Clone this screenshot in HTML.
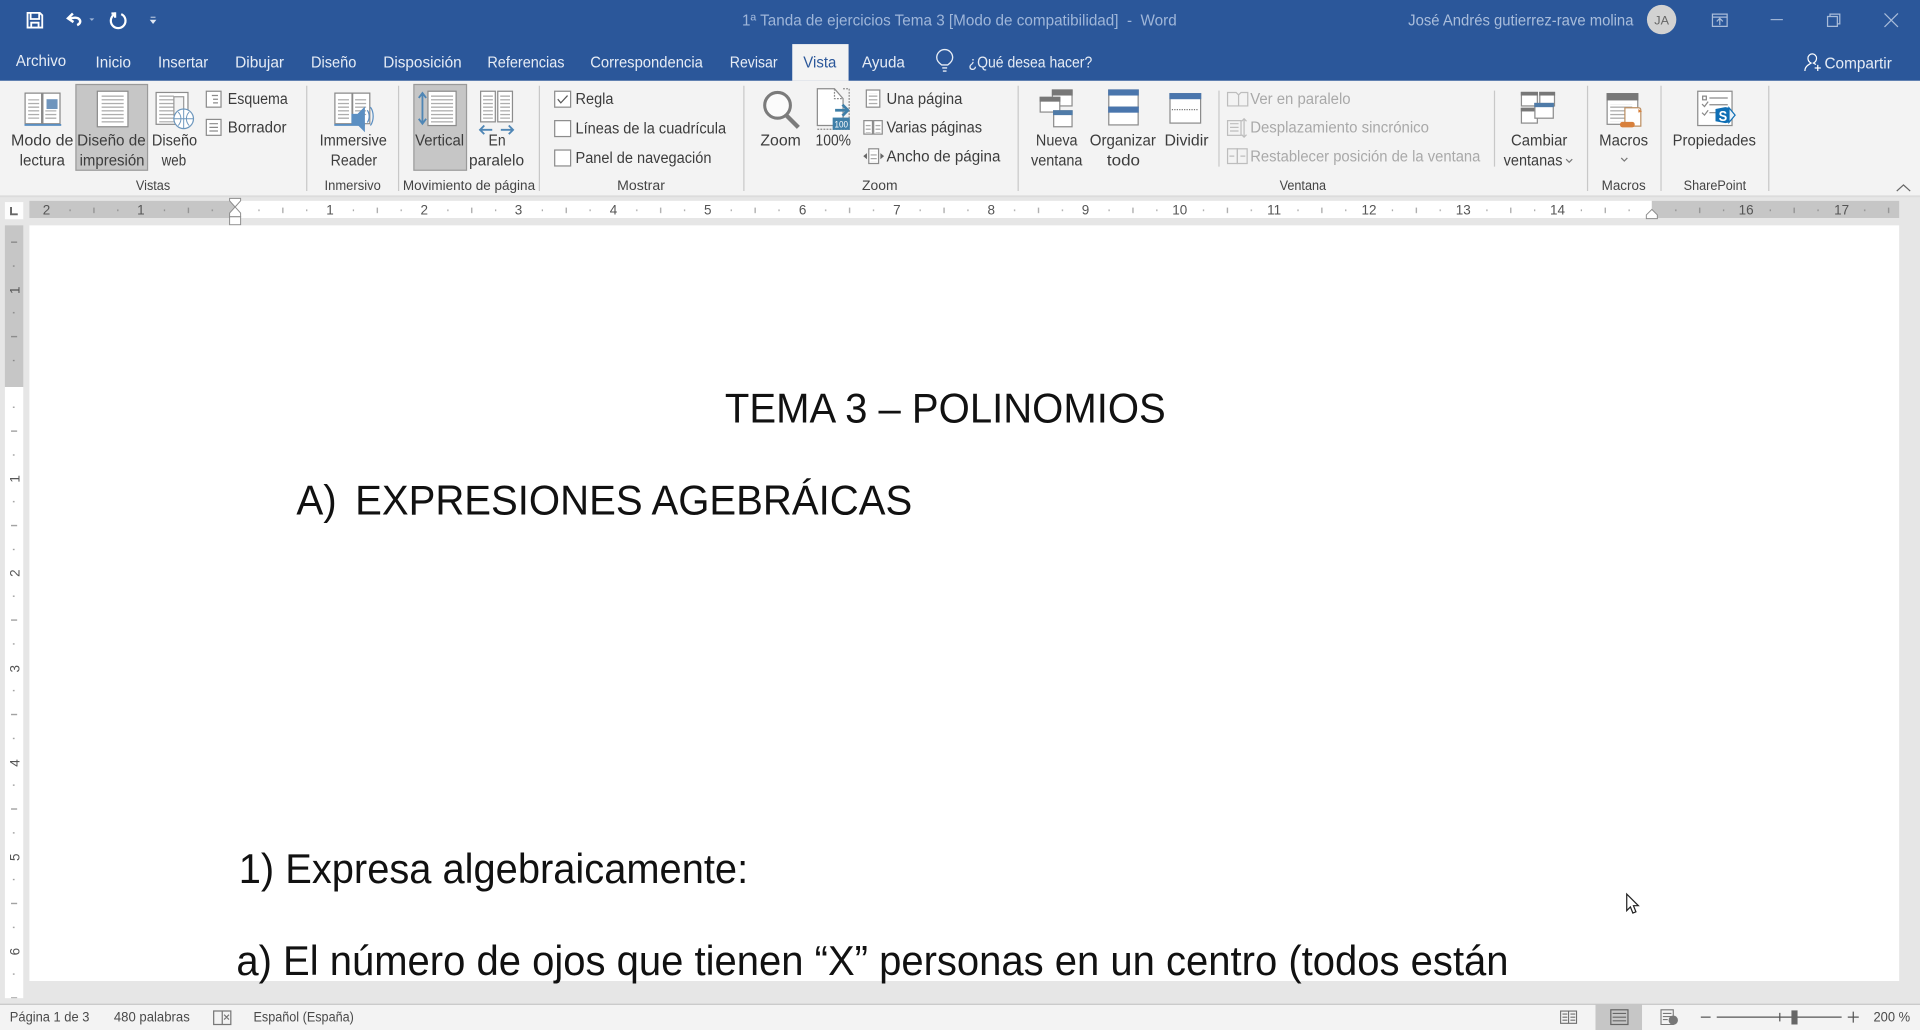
<!DOCTYPE html>
<html lang="es"><head><meta charset="utf-8"><title>Word</title>
<style>
html,body{margin:0;padding:0;width:1920px;height:1030px;overflow:hidden;background:#e6e6e6}
svg{display:block;position:absolute;left:0;top:0}
text{font-family:"Liberation Sans",sans-serif;white-space:pre}
.u{font-size:12.5px;fill:#3c3c3c}
.g{font-size:11px;fill:#444}
.t{font-size:12.5px;fill:#e6ecf5}
.d{font-size:12.5px;fill:#a9a9a9}
.s{font-size:11px;fill:#4a4a4a}
.r{font-size:11px;fill:#555;text-anchor:middle}
.b{font-size:34px;fill:#111}
.ln{fill:none;stroke:#8a8a8a;stroke-width:1}
.p{fill:#fff;stroke:#8c8c8c;stroke-width:1}
.dis{fill:none;stroke:#bdbdbd;stroke-width:1}
.sep{stroke:#c8c8c8;stroke-width:1}
</style></head><body>
<svg width="1920" height="1030" viewBox="0 0 1568 841" preserveAspectRatio="none" xmlns="http://www.w3.org/2000/svg">
<defs>
<pattern id="lines" width="6" height="3" patternUnits="userSpaceOnUse"><rect width="6" height="1" fill="#a8a8a8"/></pattern>
<pattern id="rh" x="192" y="0" width="77.14" height="20" patternUnits="userSpaceOnUse">
<rect x="19" y="9" width="1" height="1.4" fill="#666"/><rect x="38.5" y="7.5" width="1" height="4.5" fill="#666"/><rect x="58" y="9" width="1" height="1.4" fill="#666"/></pattern>
<pattern id="rv" x="0" y="313" width="20" height="77.14" patternUnits="userSpaceOnUse">
<rect x="10.5" y="19" width="1.4" height="1" fill="#666"/><rect x="9" y="38.5" width="5" height="1" fill="#666"/><rect x="10.5" y="58" width="1.4" height="1" fill="#666"/></pattern>
</defs>

<rect width="1568" height="841" fill="#e6e6e6"/>
<!-- title bar -->
<rect width="1568" height="66" fill="#2b579a"/>
<!-- QAT -->
<path d="M22.500 10.500h10l2 2v10h-12zM25 10.500v5h7v-5M25.500 22.500v-4h6v4" fill="none" stroke="#fff" stroke-width="1.500"/>
<path d="M63 20.500c2.500-1 3-3 2-4.500-1.500-2-5-2-8.500-.5M59.500 11l-4 4 4.500 3" fill="none" stroke="#fff" stroke-width="2"/>
<path d="M73 15l2 2 2-2z" fill="#9fb6d8"/>
<path d="M94 11.500a6 6 0 1 0 5 0M94 10v4.500M91 11h3.500" fill="none" stroke="#fff" stroke-width="1.800"/>
<path d="M123 14h4M123 16.500h4l-2 2.500z" fill="#dfe7f3" stroke="#dfe7f3" stroke-width=".7"/>
<text x="606" y="21" textLength="355" lengthAdjust="spacingAndGlyphs" style="font-size:12.500px;fill:#9fb6d9">1ª Tanda de ejercicios Tema 3 [Modo de compatibilidad]  -  Word</text>
<text x="1150" y="21" textLength="184" lengthAdjust="spacingAndGlyphs" style="font-size:12.500px;fill:#a9bddb">José Andrés gutierrez-rave molina</text>
<circle cx="1357" cy="16" r="12" fill="#d2d2d2"/>
<text x="1351" y="20" textLength="12" lengthAdjust="spacingAndGlyphs" style="font-size:10px;fill:#666">JA</text>
<path d="M1398.500 11.500h12v10h-12zM1398.500 14h12M1404.500 20.500v-5M1402 17.500l2.500-2.500 2.500 2.500" fill="none" stroke="#a9bcd9" stroke-width="1"/>
<path d="M1446 16h10" stroke="#9fb4d4" stroke-width="1"/>
<path d="M1492.500 13.500h8v8h-8zM1494.500 13.500v-2h8v8h-2" fill="none" stroke="#a9bcd9" stroke-width="1"/>
<path d="M1539 11l11 11M1550 11l-11 11" stroke="#a9bcd9" stroke-width="1"/>
<!-- tabs -->
<text class="t" x="13" y="54" textLength="41" lengthAdjust="spacingAndGlyphs">Archivo</text>
<text class="t" x="78" y="55" textLength="29" lengthAdjust="spacingAndGlyphs">Inicio</text>
<text class="t" x="129" y="55" textLength="41" lengthAdjust="spacingAndGlyphs">Insertar</text>
<text class="t" x="192" y="55" textLength="40" lengthAdjust="spacingAndGlyphs">Dibujar</text>
<text class="t" x="254" y="55" textLength="37" lengthAdjust="spacingAndGlyphs">Diseño</text>
<text class="t" x="313" y="55" textLength="64" lengthAdjust="spacingAndGlyphs">Disposición</text>
<text class="t" x="398" y="55" textLength="63" lengthAdjust="spacingAndGlyphs">Referencias</text>
<text class="t" x="482" y="55" textLength="92" lengthAdjust="spacingAndGlyphs">Correspondencia</text>
<text class="t" x="596" y="55" textLength="39" lengthAdjust="spacingAndGlyphs">Revisar</text>
<rect x="647" y="36" width="46" height="30" fill="#f3f3f3"/>
<text x="656" y="55" textLength="27" lengthAdjust="spacingAndGlyphs" style="font-size:12.500px;fill:#2b579a">Vista</text>
<text class="t" x="704" y="55" textLength="35" lengthAdjust="spacingAndGlyphs">Ayuda</text>
<path d="M769 53c-3-2-4-4-4-6a6.500 6.500 0 0 1 13 0c0 2-1 4-4 6zM769.500 55.500h4M770 58h3" fill="none" stroke="#e6ecf5" stroke-width="1.100"/>
<text class="t" x="791" y="55" textLength="101" lengthAdjust="spacingAndGlyphs">¿Qué desea hacer?</text>
<path d="M1474 58c0-4 3-5 5-6.500-2-1-2.500-2.500-2.500-4a3.500 3.500 0 0 1 7 0c0 1.500-.5 3-2.500 4 .8.500 1.500.8 2 1.200M1482 55.500h5M1484.500 53v5" fill="none" stroke="#fff" stroke-width="1"/>
<text class="t" x="1490" y="56" textLength="55" lengthAdjust="spacingAndGlyphs">Compartir</text>

<!-- ribbon -->
<rect y="66" width="1568" height="94" fill="#f3f3f3"/>
<rect y="159.500" width="1568" height="1.500" fill="#dcdcdc"/>
<rect x="62" y="69" width="58.500" height="70" fill="#c6c6c6" stroke="#9a9a9a"/>
<rect x="338" y="69" width="43" height="70" fill="#c6c6c6" stroke="#9a9a9a"/>
<path class="sep" d="M250.500 70v86M325.500 70v86M440.500 70v86M607.500 70v86M831.500 70v86M995.500 74v62M1220.500 74v62M1296.500 70v86M1356.500 70v86M1444.500 70v86"/>
<!-- Modo de lectura -->
<path d="M20.500 76h13.500v25h-13.500zM35 76h14v25h-14z" fill="#fff" stroke="#8a8a8a"/>
<rect x="23" y="81" width="9" height="16" fill="url(#lines)"/>
<rect x="37" y="90" width="9" height="8" fill="url(#lines)"/>
<rect x="38" y="81" width="9" height="8" fill="#6f95bd"/>
<path d="M20 102h30" stroke="#5b8fc2" stroke-width="1.500"/>
<!-- Diseño impresion -->
<rect x="79.500" y="74.500" width="25" height="29" class="p"/>
<rect x="83" y="78" width="18" height="23" fill="url(#lines)"/>
<!-- web -->
<rect x="127.500" y="75.500" width="26" height="26" class="p"/>
<rect x="130" y="78" width="12" height="22" fill="url(#lines)"/>
<rect x="142" y="79" width="8" height="15" fill="#f3f3f3" stroke="#9a9a9a"/>
<circle cx="150" cy="97" r="8" fill="#fff" stroke="#6d97bd"/>
<path d="M142 97h16M150 89v16M145.500 91.500c3 3 3 8 0 11M154.500 91.500c-3 3-3 8 0 11" fill="none" stroke="#6d97bd" stroke-width=".8"/>
<!-- esquema/borrador -->
<rect x="168.500" y="74.500" width="12" height="13" class="p"/>
<path d="M173 78h5M174 81h4M174 84h4" class="ln"/>
<rect x="168.500" y="97.500" width="12" height="13" class="p"/>
<path d="M171 101h7M171 104h7M171 107h7" class="ln"/>
<!-- Immersive -->
<path d="M273.500 76h14v25h-14zM288 76h14v25h-14z" fill="#fff" stroke="#8a8a8a"/>
<rect x="276" y="80" width="9" height="18" fill="url(#lines)"/>
<rect x="290" y="80" width="9" height="14" fill="url(#lines)"/>
<path d="M273 102h25" stroke="#5b8fc2" stroke-width="1.500"/>
<path d="M287 93h5l6-6v21l-6-6h-5z" fill="#5b8fc2"/>
<path d="M300 90c2 3 2 7 0 10M302.500 87.500c3 4 3 11 0 15" fill="none" stroke="#5b8fc2" stroke-width="1"/>
<!-- Vertical -->
<rect x="349.500" y="74.500" width="23" height="28" class="p"/>
<rect x="352" y="77" width="18" height="24" fill="url(#lines)"/>
<path d="M345 76v25M342 80l3-4 3 4M342 97l3 4 3-4" fill="none" stroke="#4f86b5" stroke-width="1.500"/>
<!-- En paralelo -->
<rect x="392.500" y="74.500" width="12" height="25" class="p"/><rect x="406.500" y="74.500" width="12" height="25" class="p"/>
<rect x="394.500" y="77" width="8" height="20" fill="url(#lines)"/><rect x="408.500" y="77" width="8" height="20" fill="url(#lines)"/>
<path d="M392 106h10M395.500 102.500l-3.500 3.500 3.500 3.500M409 106h10M415.500 102.500l3.500 3.500-3.500 3.500" fill="none" stroke="#4f86b5" stroke-width="1.500"/>
<!-- checks -->
<rect x="453" y="74.500" width="13" height="13" fill="#fff" stroke="#8c8c8c"/>
<path d="M455.500 81l2.500 3 5.500-6" fill="none" stroke="#555" stroke-width="1"/>
<rect x="453" y="98.500" width="13" height="13" fill="#fff" stroke="#8c8c8c"/>
<rect x="453" y="122.500" width="13" height="13" fill="#fff" stroke="#8c8c8c"/>
<!-- Zoom -->
<circle cx="635" cy="86" r="10.500" fill="#fbfbfb" stroke="#7b7b7b" stroke-width="2.500"/>
<path d="M642 94l10 10" stroke="#7b7b7b" stroke-width="3.500"/>
<!-- 100 -->
<path d="M667.500 72.500h14l7 8v22h-21z" fill="#fff" stroke="#8c8c8c"/>
<path d="M681.500 72.500v8h7M688.500 72.500h5v33h-26" fill="none" stroke="#8c8c8c" stroke-dasharray="1.500 1"/>
<path d="M682 90h9M688 85.500l4.500 4.500-4.500 4.500" fill="none" stroke="#3f7fa8" stroke-width="2.200"/>
<rect x="680" y="96" width="14" height="10" fill="#3f7fa8"/>
<text x="681.500" y="104" textLength="11" lengthAdjust="spacingAndGlyphs" style="font-size:7.500px;fill:#fff">100</text>
<!-- pages small -->
<rect x="707.500" y="73.500" width="11" height="14" class="p"/><rect x="709.500" y="76" width="7" height="10" fill="url(#lines)"/>
<rect x="705.500" y="98.500" width="7" height="11" class="p"/><rect x="713.500" y="98.500" width="7" height="11" class="p"/>
<rect x="707" y="100.500" width="4" height="8" fill="url(#lines)"/><rect x="715" y="100.500" width="4" height="8" fill="url(#lines)"/>
<rect x="709.500" y="121.500" width="8" height="12" class="p"/><rect x="711" y="124" width="5" height="8" fill="url(#lines)"/>
<path d="M708 125l-3 2.500 3 2.500zM719 125l3 2.500-3 2.500z" fill="#666"/>
<!-- Nueva ventana -->
<rect x="859.500" y="73.500" width="16" height="13" fill="#fff" stroke="#8c8c8c"/><rect x="859" y="73" width="17" height="5" fill="#777"/>
<rect x="849.500" y="79.500" width="16" height="12" fill="#fff" stroke="#8c8c8c"/><rect x="849" y="79" width="17" height="4" fill="#777"/>
<rect x="860.500" y="90.500" width="15" height="13" fill="#fff" stroke="#8c8c8c"/><rect x="860" y="90" width="16" height="4" fill="#4f7ba8"/>
<!-- Organizar -->
<rect x="905.500" y="73.500" width="24" height="14" fill="#fff" stroke="#8c8c8c"/><rect x="905" y="73" width="25" height="5" fill="#4a76ad"/>
<rect x="905.500" y="87.500" width="24" height="14.500" fill="#fff" stroke="#8c8c8c"/><rect x="905" y="87" width="25" height="5" fill="#4a76ad"/>
<!-- Dividir -->
<rect x="955.500" y="76.500" width="25" height="24" fill="#fff" stroke="#8c8c8c"/><rect x="955" y="76" width="26" height="5" fill="#4a76ad"/>
<path d="M957 89.500h22" stroke="#777" stroke-dasharray="1 1"/>
<!-- ventana disabled icons -->
<path d="M1002.500 75.500h7l2 2v9h-9zM1011.500 77.500l2-2h5.500v11h-7.500" class="dis"/>
<rect x="1002.500" y="98.500" width="11" height="12" class="dis"/><path d="M1004.500 101h7M1004.500 104h7M1004.500 107h7M1016 97v15M1014 99l2-2 2 2M1014 110l2 2 2-2" class="dis"/>
<rect x="1002.500" y="121.500" width="8" height="12" class="dis"/><rect x="1010.500" y="121.500" width="8" height="12" class="dis"/><path d="M1004 127.500h4M1017 127.500h-4" class="dis"/>
<!-- Cambiar ventanas -->
<rect x="1242.500" y="75.500" width="13" height="11" fill="#fff" stroke="#8c8c8c"/><rect x="1242" y="75" width="14" height="3" fill="#777"/>
<rect x="1257.500" y="75.500" width="12" height="11" fill="#fff" stroke="#8c8c8c"/><rect x="1257" y="75" width="13" height="3" fill="#777"/>
<rect x="1242.500" y="88.500" width="13" height="12" fill="#fff" stroke="#8c8c8c"/><rect x="1242" y="88" width="14" height="3" fill="#777"/>
<rect x="1253.500" y="84.500" width="15" height="12" fill="#fff" stroke="#8c8c8c"/><rect x="1253" y="84" width="16" height="3.500" fill="#4f7ba8"/>
<!-- Macros -->
<rect x="1312.500" y="76.500" width="25" height="25" fill="#fff" stroke="#8c8c8c"/><rect x="1312" y="76" width="26" height="6" fill="#777"/>
<rect x="1315" y="85" width="18" height="14" fill="url(#lines)"/>
<path d="M1327 88h11c1.500 0 2 1 2 2v13h-13z" fill="#fff" stroke="#bc8f62"/>
<rect x="1323" y="99.500" width="12" height="4.500" rx="2" fill="#d8803c"/>
<path d="M1338 89l3 2-3 1z" fill="#d8803c"/>
<!-- Propiedades -->
<rect x="1386.500" y="74.500" width="28" height="28" class="p"/>
<rect x="1390.500" y="78.500" width="3" height="3" fill="none" stroke="#888"/>
<path d="M1396 80h15M1396 85.500h15M1396 92h6M1390 85l2 2 3-4M1390 92l2 2 3-4" class="ln"/>
<path d="M1401 89l8-1.500 3 .5 5 6-5 6-3 .5-8-1.500z" fill="#0f6fb5" stroke="none"/>
<path d="M1412 88l5 6-5 6z" fill="#e6f0f8" stroke="#0f6fb5"/>
<text x="1403.500" y="99" textLength="7" lengthAdjust="spacingAndGlyphs" style="font-size:12px;font-weight:bold;fill:#fff">S</text>
<!-- labels -->
<text class="u" x="9" y="119" textLength="51" lengthAdjust="spacingAndGlyphs">Modo de</text>
<text class="u" x="16" y="135" textLength="37" lengthAdjust="spacingAndGlyphs">lectura</text>
<text class="u" x="63" y="119" textLength="56" lengthAdjust="spacingAndGlyphs">Diseño de</text>
<text class="u" x="65" y="135" textLength="53" lengthAdjust="spacingAndGlyphs">impresión</text>
<text class="u" x="124" y="119" textLength="37" lengthAdjust="spacingAndGlyphs">Diseño</text>
<text class="u" x="132" y="135" textLength="20" lengthAdjust="spacingAndGlyphs">web</text>
<text class="u" x="186" y="85" textLength="49" lengthAdjust="spacingAndGlyphs">Esquema</text>
<text class="u" x="186" y="108" textLength="48" lengthAdjust="spacingAndGlyphs">Borrador</text>
<text class="g" x="111" y="155" textLength="28" lengthAdjust="spacingAndGlyphs">Vistas</text>
<text class="u" x="261" y="119" textLength="55" lengthAdjust="spacingAndGlyphs">Immersive</text>
<text class="u" x="270" y="135" textLength="38" lengthAdjust="spacingAndGlyphs">Reader</text>
<text class="g" x="265" y="155" textLength="46" lengthAdjust="spacingAndGlyphs">Inmersivo</text>
<text class="u" x="339" y="119" textLength="40" lengthAdjust="spacingAndGlyphs">Vertical</text>
<text class="u" x="399" y="119" textLength="14" lengthAdjust="spacingAndGlyphs">En</text>
<text class="u" x="383" y="135" textLength="45" lengthAdjust="spacingAndGlyphs">paralelo</text>
<text class="g" x="329" y="155" textLength="108" lengthAdjust="spacingAndGlyphs">Movimiento de página</text>
<text class="u" x="470" y="85" textLength="31" lengthAdjust="spacingAndGlyphs">Regla</text>
<text class="u" x="470" y="109" textLength="123" lengthAdjust="spacingAndGlyphs">Líneas de la cuadrícula</text>
<text class="u" x="470" y="133" textLength="111" lengthAdjust="spacingAndGlyphs">Panel de navegación</text>
<text class="g" x="504" y="155" textLength="39" lengthAdjust="spacingAndGlyphs">Mostrar</text>
<text class="u" x="621" y="119" textLength="33" lengthAdjust="spacingAndGlyphs">Zoom</text>
<text class="u" x="666" y="119" textLength="29" lengthAdjust="spacingAndGlyphs">100%</text>
<text class="u" x="724" y="85" textLength="62" lengthAdjust="spacingAndGlyphs">Una página</text>
<text class="u" x="724" y="108" textLength="78" lengthAdjust="spacingAndGlyphs">Varias páginas</text>
<text class="u" x="724" y="132" textLength="93" lengthAdjust="spacingAndGlyphs">Ancho de página</text>
<text class="g" x="704" y="155" textLength="29" lengthAdjust="spacingAndGlyphs">Zoom</text>
<text class="u" x="846" y="119" textLength="34" lengthAdjust="spacingAndGlyphs">Nueva</text>
<text class="u" x="842" y="135" textLength="42" lengthAdjust="spacingAndGlyphs">ventana</text>
<text class="u" x="890" y="119" textLength="54" lengthAdjust="spacingAndGlyphs">Organizar</text>
<text class="u" x="904" y="135" textLength="27" lengthAdjust="spacingAndGlyphs">todo</text>
<text class="u" x="951" y="119" textLength="36" lengthAdjust="spacingAndGlyphs">Dividir</text>
<text class="d" x="1021" y="85" textLength="82" lengthAdjust="spacingAndGlyphs">Ver en paralelo</text>
<text class="d" x="1021" y="108" textLength="146" lengthAdjust="spacingAndGlyphs">Desplazamiento sincrónico</text>
<text class="d" x="1021" y="132" textLength="188" lengthAdjust="spacingAndGlyphs">Restablecer posición de la ventana</text>
<text class="g" x="1045" y="155" textLength="38" lengthAdjust="spacingAndGlyphs">Ventana</text>
<text class="u" x="1234" y="119" textLength="46" lengthAdjust="spacingAndGlyphs">Cambiar</text>
<text class="u" x="1228" y="135" textLength="48" lengthAdjust="spacingAndGlyphs">ventanas</text>
<path d="M1279 130l2.500 2.500 2.500-2.500M1324 129l2.500 2.500 2.500-2.500" fill="none" stroke="#777"/>
<text class="u" x="1306" y="119" textLength="40" lengthAdjust="spacingAndGlyphs">Macros</text>
<text class="g" x="1308" y="155" textLength="36" lengthAdjust="spacingAndGlyphs">Macros</text>
<text class="u" x="1366" y="119" textLength="68" lengthAdjust="spacingAndGlyphs">Propiedades</text>
<text class="g" x="1375" y="155" textLength="51" lengthAdjust="spacingAndGlyphs">SharePoint</text>
<path d="M1549 156l5.500-5 5.500 5" fill="none" stroke="#666"/>

<!-- rulers -->
<rect x="4" y="165" width="15" height="14" fill="#fdfdfd"/>
<path d="M9 169v6h5.500" fill="none" stroke="#666" stroke-width="1.600"/>
<rect x="24" y="164" width="168" height="14" fill="#c6c6c6"/>
<rect x="192" y="164" width="1157" height="14" fill="#fff"/>
<rect x="1349" y="164" width="202" height="14" fill="#c6c6c6"/>
<rect x="24" y="164" width="1527" height="14" fill="url(#rh)" transform="translate(0,2)" opacity=".6"/>
<g>
<text class="r" x="38" y="175">2</text><text class="r" x="115" y="175">1</text>
<text class="r" x="269.500" y="175">1</text><text class="r" x="346.500" y="175">2</text><text class="r" x="423.500" y="175">3</text><text class="r" x="501" y="175">4</text><text class="r" x="578" y="175">5</text><text class="r" x="655.500" y="175">6</text><text class="r" x="732.500" y="175">7</text><text class="r" x="809.500" y="175">8</text><text class="r" x="886.500" y="175">9</text><text class="r" x="963.500" y="175">10</text><text class="r" x="1040.500" y="175">11</text><text class="r" x="1118" y="175">12</text><text class="r" x="1195" y="175">13</text><text class="r" x="1272" y="175">14</text><text class="r" x="1426" y="175">16</text><text class="r" x="1504" y="175">17</text>
</g>
<path d="M187.500 162h9v2l-4.500 5-4.500-5zM192 169l4.500 5v3h-9v-3z" fill="#fff" stroke="#8c8c8c" stroke-width=".8"/>
<rect x="187.500" y="177" width="9" height="6.500" fill="#fff" stroke="#8c8c8c" stroke-width=".8"/>
<path d="M1344.500 178.500v-3l4.500-4.500 4.500 4.500v3z" fill="#fff" stroke="#8c8c8c" stroke-width=".8"/>

<rect x="4" y="184" width="15" height="132" fill="#c6c6c6"/>
<rect x="4" y="316" width="15" height="499" fill="#fff"/>
<rect x="0" y="184" width="23" height="631" fill="url(#rv)" opacity=".7"/>
<g transform="rotate(-90)">
<text class="r" x="-237" y="16">1</text><text class="r" x="-391" y="16">1</text><text class="r" x="-468" y="16">2</text><text class="r" x="-546" y="16">3</text><text class="r" x="-623" y="16">4</text><text class="r" x="-700" y="16">5</text><text class="r" x="-777" y="16">6</text>
</g>

<!-- page -->
<rect x="24" y="184" width="1527" height="617" fill="#fff"/>
<text class="b" x="592" y="345" textLength="360" lengthAdjust="spacingAndGlyphs">TEMA 3 – POLINOMIOS</text>
<text class="b" x="242" y="420" textLength="33" lengthAdjust="spacingAndGlyphs">A)</text>
<text class="b" x="290" y="420" textLength="455" lengthAdjust="spacingAndGlyphs">EXPRESIONES AGEBRÁICAS</text>
<text class="b" x="195" y="721" textLength="416" lengthAdjust="spacingAndGlyphs">1) Expresa algebraicamente:</text>
<text class="b" x="193" y="796" textLength="1039" lengthAdjust="spacingAndGlyphs">a) El número de ojos que tienen “X” personas en un centro (todos están</text>
<!-- cursor -->
<path d="M1328.500 730v13.500l3-3 2 5 2.500-1-2-5h4z" fill="#fff" stroke="#222" stroke-width="1"/>

<!-- status bar -->
<rect y="820" width="1568" height="21" fill="#f3f3f3"/>
<rect y="819.500" width="1568" height="1" fill="#c6c6c6"/>
<text class="s" x="8" y="834" textLength="65" lengthAdjust="spacingAndGlyphs">Página 1 de 3</text>
<text class="s" x="93" y="834" textLength="62" lengthAdjust="spacingAndGlyphs">480 palabras</text>
<path d="M174.500 825.500h7v11h-7zM181.500 825.500h7v11h-7M183 828.500l4 4M187 828.500l-4 4" fill="none" stroke="#777"/>
<text class="s" x="207" y="834" textLength="82" lengthAdjust="spacingAndGlyphs">Español (España)</text>
<rect x="1303" y="820" width="38" height="21" fill="#c6c6c6"/>
<path d="M1274.500 825.500h6.500v10h-6.500zM1281 825.500h6.500v10h-6.500M1276 828h4M1276 830.500h4M1276 833h4M1282.500 828h4M1282.500 830.500h4M1282.500 833h4" fill="none" stroke="#6f6f6f" stroke-width=".9"/>
<rect x="1315.500" y="824.500" width="14" height="12" fill="none" stroke="#666"/>
<path d="M1317 827.500h11M1317 830.500h11M1317 833.500h11" stroke="#666" stroke-width=".9"/>
<path d="M1356.500 824.500h10v12h-10zM1358 827.500h7M1358 830h7M1358 832.500h4" fill="none" stroke="#777" stroke-width=".9"/>
<circle cx="1366.500" cy="833" r="3.800" fill="#777"/>
<path d="M1389 830.500h8" stroke="#555"/>
<path d="M1402 830.500h102" stroke="#555"/>
<path d="M1453.500 827v7" stroke="#555"/>
<rect x="1463" y="825" width="5" height="11.500" fill="#666"/>
<path d="M1509 830.500h9M1513.500 826v9" stroke="#555"/>
<text class="s" x="1530" y="834" textLength="30" lengthAdjust="spacingAndGlyphs">200 %</text>
</svg>
</body></html>
